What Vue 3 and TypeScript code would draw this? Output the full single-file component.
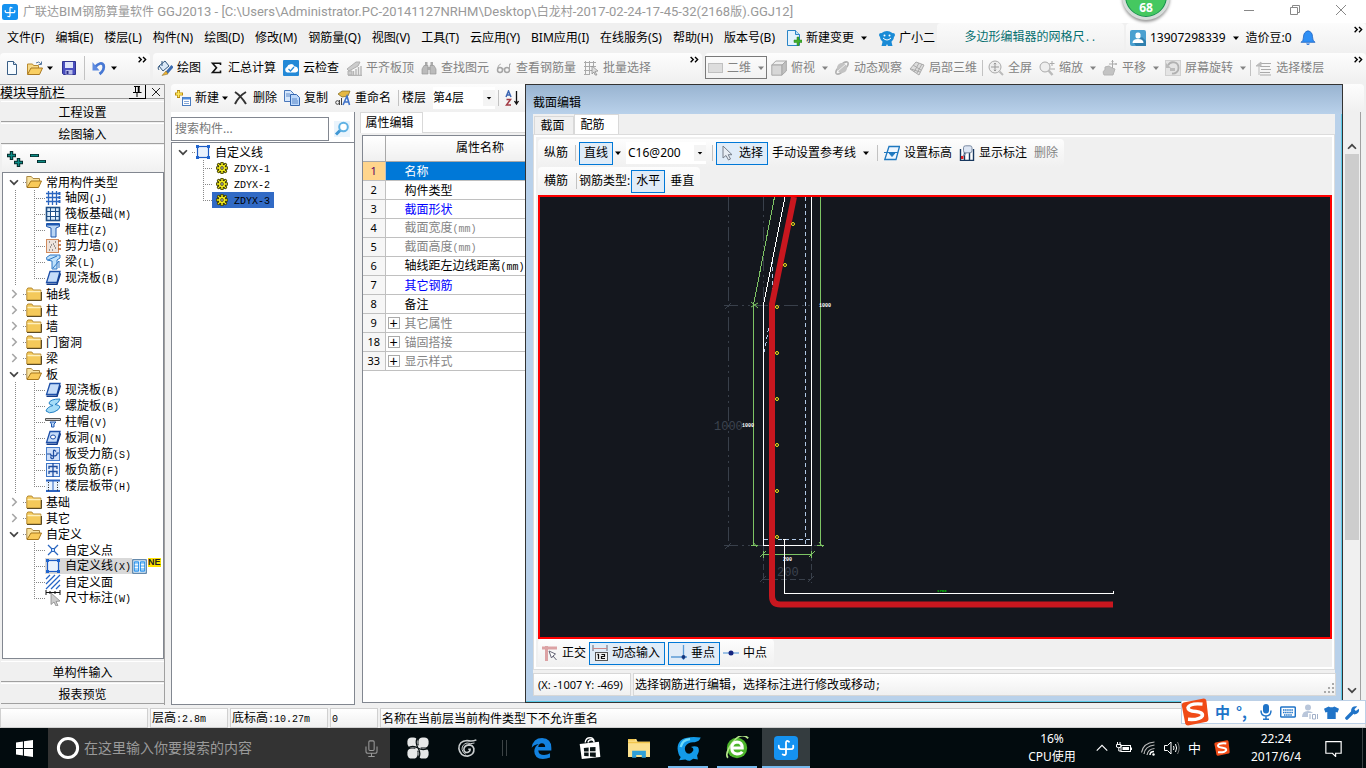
<script setup lang="ts">
import { h, ref } from 'vue'

const icons: Record<string, string> = {
  app: '<rect width="16" height="16" rx="2.500" fill="#1592f0"/><path d="M10 3.800Q8 2.500 8 4.500V11.500Q8 13.300 5.800 12.300M3.200 6.500Q3 8.700 4.800 8.700H11.500Q13.200 8.700 12.800 6.500" fill="none" stroke="#fff" stroke-width="1.200" stroke-linecap="round"/>',
  newdoc: '<path d="M3.500 1.500h6l3 3v10h-9z" fill="#f6fbff" stroke="#3a5f86"/><path d="M9.500 1.500v3h3" fill="#cfe0f2" stroke="#3a5f86"/>',
  open: '<path d="M.5 14V4h5l1 1.500h5V8" fill="#f6d987" stroke="#b98a2f"/><path d="M.5 14.500 4 8h11.500l-3 6.500z" fill="#f9cf62" stroke="#a97822"/><path d="M9 3q3-2.500 5 1M14.500 1.500V4.500H11.500" fill="none" stroke="#5577a0"/>',
  save: '<path d="M1.500 1.500h13v13h-12l-1-1z" fill="#4a4fc0" stroke="#303591"/><rect x="4" y="2" width="8" height="6" fill="#dfe5fa"/><rect x="4.500" y="10" width="7" height="4.500" fill="#b7bce8"/><rect x="5.500" y="11" width="2" height="3" fill="#2c2f85"/>',
  undo: '<path d="M4 7q6-6 8.500-2 1.500 5-4 9" fill="none" stroke="#4778d4" stroke-width="2.800"/><path d="M1.500 2v8.500h7z" fill="#5d8ae0"/>',
  paint: '<path d="m2 6 6-5 4 5-6 5z" fill="#dbe9f7" stroke="#31577f"/><path d="M5 1v5M2 6q-2 2 0 4" stroke="#31577f" fill="none"/><path d="m15.500 6-6 7" stroke="#3c6db3" stroke-width="3"/><path d="m9 11-4 4.500 6-1.500z" fill="#f0b432" stroke="#7d6524" stroke-width=".5"/>',
  sigma: '<path d="M12.500 5V3.200H4.500l4 4.600-4 4.700h8v-2" fill="none" stroke="#111" stroke-width="1.600"/>',
  cloud: '<rect width="16" height="16" rx="1" fill="#2389d7"/><path d="M4 12.500a3 3 0 0 1 0-5.500 4 4 0 0 1 7.500-.5 3 3 0 0 1 1 6z" fill="#fff"/><path d="m5.500 9 2 2 3.500-4" fill="none" stroke="#2389d7" stroke-width="1.300"/>',
  slab: '<path d="m1 9 9-7 4 0-2 4-9 5zM2 15v-4h4v4z" fill="#ccc" stroke="#b0b0b0"/><path d="M7.500 11v5M10 9v7M12.500 7v9M15 6v10M2 15.500h14" stroke="#b5b5b5" stroke-width="1.400"/>',
  binoc: '<path d="M4 2h2.500v4H4zM9.500 2H12v4H9.500z" fill="#aaa"/><path d="M3 5.500h4V14H1V9zM9 5.500h4L15 9v5H9z" fill="#bbb" stroke="#999" stroke-width=".7"/><path d="M6 7h4v3H6z" fill="#aaa"/>',
  glasses: '<circle cx="4" cy="10" r="2.500" fill="none" stroke="#a5a5a5" stroke-width="1.500"/><circle cx="11" cy="10" r="2.500" fill="none" stroke="#a5a5a5" stroke-width="1.500"/><path d="M1.800 8q0-3 3-4M13.500 10V4h1.500M6.500 9h2" stroke="#aaa" fill="none"/>',
  batch: '<path d="M1 2.500h12M1 6.500h12M1 10.500h8M1 14.500h6M2.500 1v14M6.500 1v14M10.500 1v6" stroke="#aaa"/><path d="m9 6 6 5-3 .5 2 3.500h-2l-1-3-2 2z" fill="#ddd" stroke="#888" stroke-width=".7"/>',
  rect2d: '<rect x="1.500" y="3.500" width="14" height="9" fill="#ddd" stroke="#c0c0c0"/>',
  cube: '<path d="m.8 5 4-4h10.500L11 5z" fill="#eee" stroke="#a8a8a8"/><path d="M.8 5H11v10.200H.8z" fill="#d7d7d7" stroke="#a8a8a8"/><path d="m11 5 4.300-4v10L11 15z" fill="#c0c0c0" stroke="#a8a8a8"/>',
  orbit: '<ellipse cx="8" cy="8" rx="8" ry="3" transform="rotate(-45 8 8)" fill="none" stroke="#b0b0b0" stroke-width="1.500"/><circle cx="8" cy="8" r="5" fill="#c3c3c3"/><path d="m4 11 8-7" stroke="#eee"/>',
  part3d: '<path d="m1 9 6-7 8 3-5 10z" fill="#ddd" stroke="#aaa"/><path d="m4 5 8 5M2 9l9 3M10 3 5 12M13 4l-5 9" stroke="#aaa"/>',
  full: '<circle cx="7" cy="7" r="6" fill="#eee" stroke="#aaa"/><path d="M7 3v8M3 7h8M5.800 4.200 7 3l1.200 1.200M5.800 9.800 7 11l1.200-1.200" stroke="#999" fill="none"/><path d="m11.500 11.500 3.500 3.500" stroke="#bbb" stroke-width="2"/>',
  zoom: '<circle cx="6" cy="7" r="5" fill="#eee" stroke="#aaa"/><path d="m9.500 10.500 4 4.500" stroke="#bbb" stroke-width="2.500"/><path d="M13 1v5M10.500 3.500h5M11 9h5" stroke="#aaa"/>',
  pan: '<path d="M2 15q-2-4 1-5V7l4-1 3 2 3 1-2 6z" fill="#c3c3c3" stroke="#b5b5b5"/><path d="M10.500 0v8M7 4h8M9.500 1.500l1-1 1 1M13.500 3l1 1-1 1" stroke="#aaa" fill="none"/>',
  rotate: '<rect x=".5" y=".5" width="15" height="15" fill="#e4e4e4" stroke="#d0d0d0"/><path d="M3 5.500A5.500 5.500 0 0 1 13.500 8 5.500 5.500 0 0 1 7 13.500" fill="none" stroke="#b0b0b0" stroke-width="1.800"/><path d="M1 3v5h5zM5 8h5v3H5z" fill="#bbb"/>',
  floors: '<path d="M5 3.500h10M4 6.500h10M5 9.500h10M4 12.500h10M4 15h11" stroke="#aaa" stroke-width="1.200"/><path d="m0 6 5-4v4zM3 6v9" fill="#bbb" stroke="#bbb"/>',
  docplus: '<path d="M1.500.5h8l4 4v11h-12z" fill="#e4f3fd" stroke="#2a85c7"/><path d="M9.500.5v4h4" fill="#bde0f7" stroke="#2a85c7"/><path d="M8 10h3V7h2v3h3v2.500h-3V15.500h-2v-3H8z" fill="#3fae2a" stroke="#2b8220" stroke-width=".5"/>',
  mascot: '<circle cx="2" cy="5" r="2" fill="#1a8bd6"/><circle cx="14" cy="5" r="2" fill="#1a8bd6"/><ellipse cx="8" cy="7" rx="7" ry="6" fill="#1a8bd6"/><path d="M4 10h8l1.500 6H9l-1-2-1 2H2.500z" fill="#1a8bd6"/><circle cx="5.500" cy="5.500" r="1" fill="#fff"/><circle cx="10.500" cy="5.500" r="1" fill="#fff"/><path d="M4 8q4 4 8 0" fill="none" stroke="#fff"/>',
  user: '<rect width="16" height="16" rx="2" fill="#4aa0d0"/><path d="m4 13 8-6 4 4v5H6z" fill="#2f7fae"/><rect x="5.500" y="2.500" width="5" height="6" rx="2" fill="#fff"/><path d="M2.500 13q0-4 5.500-4t5.500 4z" fill="#fff"/>',
  bell: '<path d="M8 .8q4.500 1 4.500 6 0 4 2.500 5.500H1Q3.500 11 3.500 7q0-5 4.500-6.200z" fill="#2f8ff5" stroke="#1d62c0" stroke-width=".8"/><path d="M6 13.500h4q-2 3-4 0z" fill="#2273dd"/>',
  create: '<path d="M3.500 0v8M0 4h8" stroke="#b98b10" stroke-width="3"/><path d="M3.500 1v6M1 4h6" stroke="#ffe95c" stroke-width="1.500"/><rect x="7.500" y="7.500" width="8" height="8" fill="#fff" stroke="#4a7cc0"/><path d="M8 8.500h7" stroke="#4f8de0" stroke-width="2"/><path d="M9 11.500h5M9 13.500h5" stroke="#86a8d8"/>',
  del: '<path d="M2 2q6 4 11 12M13 2Q6 6 2 14" stroke="#333" stroke-width="2" fill="none"/>',
  copy: '<path d="M.5.500h6l3 3v8h-9z" fill="#d6e7fc" stroke="#4a78bb"/><path d="M6.500 4.500h6l3 3v8h-9z" fill="#bcd8fb" stroke="#3567b0"/><path d="M8 9h5M8 11h6M8 13h6M2 4h4M2 6h4" stroke="#4373ba" stroke-width=".8"/>',
  rename: '<path d="m3 4 4-3h8l-2 5-6 1z" fill="#e5b843" stroke="#7a6520" stroke-width=".7"/><path d="m8 15 4-9 2.500 9M9 12h4" fill="none" stroke="#3e72c8" stroke-width="1.600"/><circle cx="2.500" cy="12.500" r="1.800" fill="none" stroke="#444"/><path d="M4.500 10v5M6.500 8v7" stroke="#444"/>',
  sort: '<path d="M2 7 4.500 1 7 7M3 5h3" fill="none" stroke="#3e68b4" stroke-width="1.500"/><path d="M2.500 9.500h4L2.500 15H7" fill="none" stroke="#a33c46" stroke-width="1.500"/><path d="M12.500 1v12M10.500 11l2 3 2-3" fill="none" stroke="#111" stroke-width="1.300"/>',
  search: '<rect x="0" y="0" width="16" height="16" fill="#eaf4fc"/><circle cx="9.500" cy="6" r="4.300" fill="#fff" stroke="#5fb2e4" stroke-width="2"/><path d="m6 9.500-4 4" stroke="#3f97d4" stroke-width="3"/>',
  folder: '<path d="M.8 14V3.500l1-1.500h4l1.500 2h7.500v10z" fill="#f4c95a" stroke="#b58a32"/><path d="M1.500 5.500h13" stroke="#fff0bd" stroke-width="1.500"/><path d="M1 14.500h14.500V6" fill="none" stroke="#5b4b25"/>',
  fopen: '<path d="M.8 13V2.500h4.500L7 4.500h6.500V7" fill="#f9e3a0" stroke="#a98742"/><path d="M1 13.500 5 7h10.500l-3 6.500z" fill="#f9ca59" stroke="#a5761e"/>',
  grid: '<path d="M3.500 1v14M7.500 1v14M11.500 1v14M1 3.500h13M1 7.500h13M1 11.500h13" stroke="#2b66c0" stroke-width="1.300"/><path d="M13.500 2h2v3h-2zM13.500 6h2v3h-2zM13.500 10h2v3h-2z" fill="#2b66c0"/>',
  raft: '<rect x="1.500" y="1.500" width="13" height="13" fill="#d7eafa" stroke="#1f4f86" stroke-width="1.600"/><rect x="5.500" y="5.500" width="5" height="5" fill="#fff" stroke="#1f4f86"/><path d="M5.500 1v4.500M10.500 1v4.500M5.500 10.500V15M10.500 10.500V15M1 5.500h4.500M1 10.500h4.500M10.500 5.500H15M10.500 10.500H15" stroke="#1f4f86"/>',
  column: '<path d="M1.500 1.500h13v3l-3.500 1.500V15H6V6L1.500 4.500z" fill="#b9d5f4" stroke="#1d57ae"/><path d="M2 2.500h12" stroke="#1d57ae" stroke-width="2"/>',
  wall: '<rect x="1.500" y="1.500" width="12" height="13" fill="#eee3dc" stroke="#cf8a5c"/><path d="M4 4h1M8 6h1M5 9h1M10 10h1M7 12h1M10 4h1M4 12h1M6 7h1M9 8h1" stroke="#444"/><path d="M13 3h3M13 7h3M13 11h3" stroke="#b9602c" stroke-width="1.500"/>',
  beam: '<path d="M1.500 3.500 5 1h10v3l-3 2v9H7V7L2 6z" fill="#bfe1fb" stroke="#2e77c4"/><path d="m3 6 9-4M8 14l6-7v7" stroke="#2e77c4" fill="none"/>',
  plate: '<path d="M5 1.500h10l-3 11H1.500z" fill="#c5dcf9" stroke="#1d4fa8" stroke-width="1.300"/><path d="M1.500 14.300H12l3.500-11" fill="none" stroke="#123c8c" stroke-width="1.500"/>',
  spiral: '<path d="M15 1Q5 1 4 5q0 2 4 2.500Q2 9 1 13q3 3 8 1 5-2 6-5 0-2-5-2.500 4-1.500 5-5.500z" fill="#a5ddf8" stroke="#2480c5"/>',
  cap: '<path d="M.5 4.500h15v2H.5z" fill="#ccc" stroke="#555"/><path d="M5 8h6l-2 2v3H6.500v-3z" fill="#bcd8fa" stroke="#1d57ae"/>',
  hole: '<path d="M5 1.500h10l-3 11H1.500z" fill="#c5dcf9" stroke="#1d4fa8" stroke-width="1.300"/><path d="M1.500 14.300H12l3.500-11" fill="none" stroke="#123c8c" stroke-width="1.500"/><ellipse cx="8" cy="7" rx="2.500" ry="2" fill="#fff" stroke="#1d4fa8"/>',
  rebarS: '<rect x="1.500" y="1.500" width="13" height="13" fill="#cfe0fa" stroke="#4a80cc"/><path d="M11 5.500Q8.500 3 8.500 5V12Q6.500 14 5.500 10.500M2 8h3.500q0 2 3 2 4 0 3.500-3h2" fill="none" stroke="#1e4ea0" stroke-width="1.200"/>',
  rebarF: '<rect x="1.500" y="1.500" width="13" height="13" fill="#e4eefc" stroke="#3c74c6"/><path d="M8 1v14M4 7V4.500h8V7M4 12V9.500h8V12" fill="none" stroke="#1e4ea0" stroke-width="1.300"/>',
  strip: '<rect x="1" y="2" width="14" height="12" fill="#e9f3ff"/><path d="M1 2.500h14M1 13h14" stroke="#2a62c0" stroke-width="1.800"/><path d="M8 3v10" stroke="#2a62c0"/><path d="M3.500 4v9M12.500 4v9" stroke="#222" stroke-dasharray="1 1.500"/>',
  point: '<path d="m3 3 3.500 3.500M13 3 9.500 6.500M3 13l3.500-3.500M13 13 9.500 9.500" stroke="#2a66c0" stroke-width="1.300"/><rect x="6.500" y="6.500" width="3" height="3" fill="#bcdcff" stroke="#2a66c0"/>',
  poly: '<rect x="2.500" y="2.500" width="11" height="11" fill="#eaf2fd" stroke="#1d5bc4" stroke-width="1.200"/><path d="M1 1h3v3H1zM12 1h3v3h-3zM1 12h3v3H1zM12 12h3v3h-3z" fill="#2065cf"/>',
  hatch: '<path d="m1 5 4-4M1 10l9-9M1 15 15 1M6 15l9-9M11 15l4-4" stroke="#2464c6" stroke-width="1.200"/>',
  dim: '<path d="M1 0v5M15 0v5M1 2.500h14M5 1v3M10 1v3" stroke="#111"/><path d="m6 3 9 8-4 .5 2 4-2 .5-2-4-3 2.500z" fill="#ccc" stroke="#888" stroke-width=".8"/>',
  gear: '<path d="M6 0h4v2l3-1 2 2-1 3h2v4h-2l1 3-2 2-3-1v2H6v-2l-3 1-2-2 1-3H0V6h2L1 3l2-2 3 1z" fill="#3a3800"/><path d="M7 1h2v14H7zM1 7h14v2H1zM3 2l11 11-1 1L2 3zM13 2l1 1L3 14l-1-1z" fill="#f4ec1e"/><circle cx="8" cy="8" r="4.200" fill="#f4ec1e"/><circle cx="8" cy="8" r="2.200" fill="#222"/><circle cx="8" cy="8" r="1.100" fill="#fff"/>',
  video: '<rect x=".8" y=".8" width="14.400" height="14.400" fill="#e8f5ff" stroke="#2a5c8c"/><path d="M2.500 3h4.500v10H2.500zM9 3h4.500v10H9z" fill="#9bcdf5" stroke="#1d8bea"/><path d="M3 6h3.500M3 9h3.500M9.500 6H13M9.500 9H13" stroke="#fff"/>',
  expandAll: '<path d="M4.500 0v9M0 4.500h9M11.500 7v9M7 11.500h9" stroke="#082c2c" stroke-width="3.400"/><path d="M4.500 1v7M1 4.500h7M11.500 8v7M8 11.500h7" stroke="#0c8c86" stroke-width="1.400"/>',
  collapseAll: '<path d="M0 4.500h9M7 10.500h9" stroke="#082c2c" stroke-width="3.200"/><path d="M1 4.500h7M8 10.500h7" stroke="#0c8c86" stroke-width="1.300"/>',
  pin: '<path d="M5 3.500h6M6.500 4v5M10 4v5M4 9.500h8.500M8 10v4" stroke="#000" fill="none"/><path d="M9.500 4v5" stroke="#000" stroke-width="1.500"/>',
  close: '<path d="m4 4 8 8M12 4l-8 8" stroke="#222" stroke-width="1"/>',
  down: '<path d="M5 6.500h6L8 10z" fill="currentColor"/>',
  more: '<path d="m3 4.500 3 3-3 3M8 4.500l3 3-3 3" fill="none" stroke="#000" stroke-width="1.600"/>',
  chevD: '<path d="m3.500 6 4.500 4.500L12.500 6" fill="none" stroke="#444" stroke-width="2"/>',
  chevR: '<path d="m6 3.500 4.500 4.500L6 12.500" fill="none" stroke="#a5a5a5" stroke-width="1.800"/>',
  cursor: '<path d="M3 1v12l3-2.500L8.500 15l2-1-2.300-4.300H12z" fill="#e8edf3" stroke="#777f8a"/>',
  level: '<path d="M5 1.500h10.500L12 14.500H.8z" fill="#eef6ff" stroke="#1f78c0" stroke-width="1.300"/><path d="M0 7.500h14M5 8h6l-3 3.500z" fill="#1f78c0" stroke="#1f78c0"/>',
  note: '<path d="M1.500 4v11.500h13V4M5.500 7v8M10.500 7v8" fill="#fff" stroke="#17375e" stroke-width="1.400"/><rect x="4.500" y=".8" width="8.500" height="7" rx="2" fill="#dde6f4" stroke="#7c8ca4"/><path d="m7 8-3 3" stroke="#7c8ca4" stroke-width="1.500"/><path d="M2 11h2.500v3H2z" fill="#d22"/>',
  ortho: '<path d="M0 3h15M4.500 1v15" stroke="#dca2a4" stroke-width="3"/><path d="m7 6 2.500 7 1.500-2 3.500 4M7 6l6.500 3-2.500 2" fill="#fff" stroke="#667" stroke-width="1"/>',
  dyn: '<path d="M1 0v6M15 0v6" stroke="#667"/><path d="M1 3.500h14" stroke="#c88"/><rect x="3.500" y="7.500" width="12" height="8" fill="#f0f0f0" stroke="#555"/><path d="M6.500 9v5M5.500 10l1-1M9.500 9.500h3v2h-3v2h3.500" fill="none" stroke="#111" stroke-width="1.200"/>',
  perp: '<path d="M0 12h16M12.500 0v15" stroke="#5b9bd5" stroke-width="1.300"/><circle cx="12.500" cy="12" r="2" fill="#14387f"/>',
  mid: '<path d="M0 8h16" stroke="#77abdf" stroke-width="1.400"/><circle cx="8" cy="8" r="2.500" fill="#14247f"/>',
  win: '<path d="m0 2.300 6.500-.9v6.100H0zM7.500 1.200 16 0v7.500H7.500zM0 8.500h6.500v6.100L0 13.700zM7.500 8.500H16V16l-8.500-1.200z" fill="#fff"/>',
  ring: '<circle cx="8" cy="8" r="6.400" fill="none" stroke="#fff" stroke-width="2"/>',
  mic: '<rect x="5.500" y=".8" width="5" height="9" rx="1" fill="none" stroke="currentColor"/><path d="M2.800 6v4.500q0 2 2 2h6.400q2 0 2-2V6M8 12.500V15.500M5 15.500h6" fill="none" stroke="currentColor"/>',
  pinwheel: '<rect x=".3" y=".3" width="7.400" height="7.400" rx="3" fill="#e6e8e8"/><rect x="8.300" y=".3" width="7.400" height="7.400" rx="3" fill="#e6e8e8"/><rect x=".3" y="8.300" width="7.400" height="7.400" rx="3" fill="#e6e8e8"/><rect x="8.300" y="8.300" width="7.400" height="7.400" rx="3" fill="#e6e8e8"/><rect x="6" y="6" width="4" height="4" fill="#e6e8e8"/><path d="M7.800 0Q5.500 4 8 8 4 5.500 0 8.300M8.300 16Q10.500 12 8 8q4 2.500 8-.2" fill="none" stroke="#071012" stroke-width=".9"/>',
  swirl: '<path d="M15.500 1.500Q12 3 8 2 1.500 2.500 1.500 8.500q1 6 7 6 5.500-1 5-6-1-3-4-3-4 .5-4 3.800.5 2.700 3 2.200 2-.5 2-2.500H9" fill="none" stroke="#c9cdce" stroke-width="1.300"/><path d="M14 4q-3 1-6 0-4 1-4 5 .5 3 3 4" fill="none" stroke="#c9cdce" stroke-width=".8"/>',
  edge: '<path d="M.5 7.500Q1.500 0 8.500 0 15.500.300 15.500 7.500V9.500H5.500q.5 3.500 4.500 3.500 2.500 0 4.500-1.300v3.200Q12 16 9 16 2.500 15.500 2.500 10q.3-4 3.500-5.500Q2 5 .5 7.500zM5.500 6.800h5.300Q10.700 4 8.300 4 6 4 5.500 6.800z" fill="#1382e0" fill-rule="evenodd"/>',
  store: '<path d="M4.500 4Q5 .5 8 .5T11 4M6.500 4Q7 2 9 2t2 2" fill="none" stroke="#fff"/><path d="m.5 5 14-1.500 1 11L2 16z" fill="#fff"/><path d="M3.500 8 7 7.700v2.800H3.700zM8 7.500l4-.3v3.200H8zM3.700 11.300H7V14l-3.200-.2zM8 11.300h4.200v3.200L8 14.200z" fill="#0a1416"/>',
  explorer: '<path d="M0 1.500h6l1 2h9v11H0z" fill="#fbe08e"/><path d="M0 2h5M0 4h16" stroke="#f1c54c"/><path d="M3 15V10h10v5h-3v-2H6v2z" fill="#2f9fd8"/>',
  gblue: '<path d="M15.800 1Q12 .500 9 .8 1 1.500 1 8q.3 4 2 5.500L2 15.500 6 15q1.500 1 3 .8l2-1.300 3 .5-.5-2.500Q15.500 9 14 7q-2-1-4.500 0 2 .5 1.500 2.500-1.500 2.500-4 1.500-2-2-1-4.500 2-3 6-2.500Q15 3.500 15.800 1z" fill="#139ae8"/><path d="M3 7q1-4.500 6-5" stroke="#6fdcfa" fill="none" stroke-width="1.500"/>',
  egreen: '<circle cx="8" cy="8" r="6.800" fill="#4cb52b"/><path d="M2 14.500Q-.5 12 5 4.500T15.500 1.500" stroke="#b4e68a" stroke-width="1.200" fill="none"/><path d="M11.500 10.500Q10.500 12 8 12 4.500 11.700 4.500 8T8 4q3.500 0 3.500 4H5" fill="none" stroke="#fff" stroke-width="2"/>',
  tri: '<path d="m2 11 6-6 6 6" fill="none" stroke="#fff" stroke-width="1.300"/>',
  battery: '<rect x="5" y="5.500" width="9.500" height="6" fill="none" stroke="#fff"/><rect x="6.500" y="7" width="6.500" height="3" fill="#fff"/><path d="M15.500 7.500v2.500M1.500 2v2.500M4 2v2.500M.5 4.500H5v2.500q-2 1.500-4.500 0zM2.800 8v3H5" fill="none" stroke="#fff"/>',
  wifi: '<path d="M1.500 12.500Q3 3 14.500 2M4 14Q5 6 14.500 5M7 15Q8 9 14.500 8.500" fill="none" stroke="#bbb" stroke-width="1.200"/><path d="M10 15q0-3.500 4-3.500" fill="none" stroke="#fff" stroke-width="1.500"/><circle cx="13.500" cy="14.500" r="1.200" fill="#fff"/>',
  speaker: '<path d="M.5 5.500h3L7 2v12l-3.500-3.500h-3z" fill="none" stroke="#fff"/><path d="M9.500 6q1 2 0 4M11.500 4q2.200 4 0 8" fill="none" stroke="#fff"/><path d="M13.500 2q3.300 6 0 12" fill="none" stroke="#777"/>',
  sogou: '<path d="M1.500 2.500 13 .3q1.200 0 1.500 1.200L15.700 12q0 1.200-1 1.500L4 15.700q-1.300 0-1.600-1.200L.4 4q0-1.200 1.100-1.500z" fill="#f04b17"/><path d="M12.300 3.500Q5 2.800 4 5.500q0 1.800 4.500 2.200 4.200.5 3.700 2.500-1.500 2.500-8.200 2" fill="none" stroke="#fff" stroke-width="2"/>',
  notice: '<path d="M.8 1.500h14.400v11H10v3l-3-3H.8z" fill="none" stroke="#fff" stroke-width="1.100"/>',
  smic: '<rect x="5" y="0" width="6" height="9.500" rx="3" fill="#2074c8"/><path d="M3 6.500Q3 12 8 12t5-5.500M8 12v3M5 15.300h6" fill="none" stroke="#2074c8" stroke-width="1.500"/>',
  skey: '<rect x=".7" y="3" width="14.600" height="10" rx="1" fill="#fff" stroke="#2074c8" stroke-width="1.500"/><path d="M3 6h10M3 8.500h10M4 11h8" stroke="#2074c8" stroke-width="1.300" stroke-dasharray="1.500 .6"/>',
  suser: '<circle cx="6" cy="3.500" r="3" fill="#b9c6da"/><path d="M0 13q0-6 6-6t6 6z" fill="#b9c6da"/><path d="M6 9h10v6.500H6z" fill="#fff"/><path d="M8 10v5M10.500 10.500h3v4.500h-3zM15.500 10v5" fill="none" stroke="#a2b0c8"/>',
  shirt: '<path d="M5 1.500q3 2 6 0L16 4l-1.500 4-2-.5V15h-9V7.500l-2 .5L0 4z" fill="#2074c8"/>',
  wrench: '<path d="m2 14 7-7" stroke="#2074c8" stroke-width="3.600" stroke-linecap="round"/><path d="M13 1.500 10 4.500l1.500 2 3.300-2.500Q16 9 10 10L6.500 7Q6 1 13 1.500z" fill="#2074c8"/>',
}
const Ico = (p: { n: string; s?: number | string }) =>
  h('svg', { viewBox: '0 0 16 16', width: p.s ?? 16, height: p.s ?? 16, 'aria-hidden': 'true', innerHTML: icons[p.n] })

// Splits a label into ASCII and ideograph runs so that each can be set in its own size.
const runs = (t: string) => t.split(/([\x20-\x7e]+)/).filter(Boolean).map((s) => ({ s, ascii: /^[\x20-\x7e]/.test(s) }))
// Song-style text: ASCII runs are set half as wide as the ideographs.
const Song = (p: { t: string }) =>
  h('span', { class: 'song' }, runs(p.t).map((r) => (r.ascii ? h('span', { class: 'half' }, r.s) : r.s)))

const caption = '广联达BIM钢筋算量软件 GGJ2013 - [C:\\Users\\Administrator.PC-20141127NRHM\\Desktop\\白龙村-2017-02-24-17-45-32(2168版).GGJ12]'
const menus = ['文件(F)', '编辑(E)', '楼层(L)', '构件(N)', '绘图(D)', '修改(M)', '钢筋量(Q)', '视图(V)', '工具(T)', '云应用(Y)', 'BIM应用(I)', '在线服务(S)', '帮助(H)', '版本号(B)']

interface Tool { icon?: string; text: string; off?: boolean; drop?: boolean; sep?: boolean }
const drawTools: Tool[] = [
  { icon: 'paint', text: '绘图' }, { icon: 'sigma', text: '汇总计算' }, { icon: 'cloud', text: '云检查' },
  { icon: 'slab', text: '平齐板顶', off: true }, { icon: 'binoc', text: '查找图元', off: true },
  { icon: 'glasses', text: '查看钢筋量', off: true }, { icon: 'batch', text: '批量选择', off: true },
]
const viewTools: Tool[] = [
  { icon: 'cube', text: '俯视', drop: true }, { icon: 'orbit', text: '动态观察' }, { icon: 'part3d', text: '局部三维' },
  { icon: 'full', text: '全屏', sep: true }, { icon: 'zoom', text: '缩放', drop: true }, { icon: 'pan', text: '平移', drop: true },
  { icon: 'rotate', text: '屏幕旋转', drop: true }, { icon: 'floors', text: '选择楼层', sep: true },
]
const editTools: Tool[] = [
  { icon: 'create', text: '新建', drop: true }, { icon: 'del', text: '删除' }, { icon: 'copy', text: '复制' }, { icon: 'rename', text: '重命名' },
]

interface Leaf { icon: string; text: string; sel?: boolean }
interface Group { text: string; kids?: Leaf[] }
const groups: Group[] = [
  { text: '常用构件类型', kids: [
    { icon: 'grid', text: '轴网(J)' }, { icon: 'raft', text: '筏板基础(M)' }, { icon: 'column', text: '框柱(Z)' },
    { icon: 'wall', text: '剪力墙(Q)' }, { icon: 'beam', text: '梁(L)' }, { icon: 'plate', text: '现浇板(B)' }] },
  { text: '轴线' }, { text: '柱' }, { text: '墙' }, { text: '门窗洞' }, { text: '梁' },
  { text: '板', kids: [
    { icon: 'plate', text: '现浇板(B)' }, { icon: 'spiral', text: '螺旋板(B)' }, { icon: 'cap', text: '柱帽(V)' }, { icon: 'hole', text: '板洞(N)' },
    { icon: 'rebarS', text: '板受力筋(S)' }, { icon: 'rebarF', text: '板负筋(F)' }, { icon: 'strip', text: '楼层板带(H)' }] },
  { text: '基础' }, { text: '其它' },
  { text: '自定义', kids: [
    { icon: 'point', text: '自定义点' }, { icon: 'poly', text: '自定义线(X)', sel: true }, { icon: 'hatch', text: '自定义面' }, { icon: 'dim', text: '尺寸标注(W)' }] },
]
const parts = ['ZDYX-1', 'ZDYX-2', 'ZDYX-3']
const picked = ref('ZDYX-3')

const props = [
  { n: 1, text: '名称', kind: 'on' }, { n: 2, text: '构件类型', kind: '' }, { n: 3, text: '截面形状', kind: 'blue' },
  { n: 4, text: '截面宽度(mm)', kind: 'dim' }, { n: 5, text: '截面高度(mm)', kind: 'dim' }, { n: 6, text: '轴线距左边线距离(mm)', kind: '' },
  { n: 7, text: '其它钢筋', kind: 'blue' }, { n: 8, text: '备注', kind: '' }, { n: 9, text: '其它属性', kind: 'dim', plus: true },
  { n: 18, text: '锚固搭接', kind: 'dim', plus: true }, { n: 33, text: '显示样式', kind: 'dim', plus: true },
]
const bars = [[793, 224], [785, 265], [777, 307], [777, 353], [777, 399], [777, 445], [777, 491], [777, 537]]
const search = ref('')
const floor = ref('第4层')
const spec = ref('C16@200')
</script>

<template>
  <div class="screen">
    <header class="title">
      <Ico n="app" />
      <span><span v-for="(r, i) in runs(caption)" :key="i" :class="{ cap: r.ascii }">{{ r.s }}</span></span>
      <div class="winbtns">
        <button aria-label="最小化"><svg width="12" height="12"><path d="M1 6.500h10" stroke="#888" /></svg></button>
        <button aria-label="还原"><svg width="12" height="12"><path d="M1.500 3.500h7v7h-7zM3.500 3V1.500h7v7H9" fill="none" stroke="#888" /></svg></button>
        <button aria-label="关闭"><svg width="12" height="12"><path d="m1 1 10 10M11 1 1 11" stroke="#888" /></svg></button>
      </div>
    </header>
    <div class="badge">68</div>

    <div class="menurow">
      <nav class="menus">
        <button v-for="m in menus" :key="m">{{ m }}</button>
        <button class="tool"><Ico n="docplus" /><span>新建变更</span><Ico n="down" class="arrow wide" /></button>
        <button class="tool"><Ico n="mascot" /><span>广小二</span></button>
      </nav>
      <div class="news"><a href="#"><Song t="多边形编辑器的网格尺.." /></a></div>
      <div class="account">
        <button class="tool"><Ico n="user" /><span>13907298339</span><Ico n="down" class="arrow" /></button>
        <button>造价豆:0</button>
        <button aria-label="通知"><Ico n="bell" /></button>
        <button class="more" aria-label="更多"><Ico n="more" s="14" /></button>
      </div>
    </div>

    <div class="bars">
      <div class="bar first">
        <button aria-label="新建"><Ico n="newdoc" /></button>
        <button aria-label="打开"><Ico n="open" /></button>
        <button aria-label="打开选项"><Ico n="down" class="arrow" /></button>
        <button aria-label="保存"><Ico n="save" /></button>
        <i class="sep"></i>
        <button aria-label="撤销"><Ico n="undo" /></button>
        <button aria-label="撤销选项"><Ico n="down" class="arrow" /></button>
        <button class="more" aria-label="更多"><Ico n="more" s="14" /></button>
      </div>
      <div class="bar second">
        <button v-for="t in drawTools" :key="t.text" class="tool" :class="{ off: t.off }"><Ico :n="t.icon!" /><span>{{ t.text }}</span></button>
        <button class="more" aria-label="更多"><Ico n="more" s="14" /></button>
      </div>
      <div class="bar third">
        <button class="tool off boxed"><Ico n="rect2d" /><span>二维</span><Ico n="down" class="arrow" /></button>
        <template v-for="t in viewTools" :key="t.text">
          <i v-if="t.sep" class="sep"></i>
          <button class="tool off"><Ico :n="t.icon!" /><span>{{ t.text }}</span><Ico v-if="t.drop" n="down" class="arrow" /></button>
        </template>
        <button class="more" aria-label="更多"><Ico n="more" s="14" /></button>
      </div>
    </div>

    <main class="work">
      <aside class="nav">
        <div class="navhead"><Song t="模块导航栏" /><button class="pin" aria-label="固定"><Ico n="pin" /></button><button aria-label="关闭"><Ico n="close" /></button></div>
        <button class="wide-btn"><Song t="工程设置" /></button>
        <button class="wide-btn"><Song t="绘图输入" /></button>
        <div class="navtools"><button aria-label="全部展开"><Ico n="expandAll" /></button><button aria-label="全部折叠"><Ico n="collapseAll" /></button></div>
        <ul class="tree">
          <li v-for="(g, gi) in groups" :key="gi">
            <div class="row"><Ico :n="g.kids ? 'chevD' : 'chevR'" s="14" /><i class="dots"></i><Ico :n="g.kids ? 'fopen' : 'folder'" /><Song :t="g.text" /></div>
            <ul v-if="g.kids">
              <li v-for="(k, ki) in g.kids" :key="k.text" class="row kid">
                <svg class="trunk" width="19" height="16"><path v-if="gi < groups.length - 1" d="M.5 0v16" stroke="#888" stroke-dasharray="1 1" /></svg>
                <svg width="11" height="16"><path :d="ki === g.kids.length - 1 ? 'M.5 0v8M0 8.500h11' : 'M.5 0v16M0 8.500h11'" stroke="#888" stroke-dasharray="1 1" /></svg>
                <span class="leaf" :class="{ sel: k.sel }"><Ico :n="k.icon" /><Song :t="k.text" /></span>
                <template v-if="k.sel"><Ico n="video" s="15" /><b class="ne">NE</b></template>
              </li>
            </ul>
          </li>
        </ul>
        <button class="wide-btn"><Song t="单构件输入" /></button>
        <button class="wide-btn"><Song t="报表预览" /></button>
      </aside>

      <section class="main">
        <div class="bar edit">
          <button v-for="t in editTools" :key="t.text" class="tool"><Ico :n="t.icon!" /><span>{{ t.text }}</span><Ico v-if="t.drop" n="down" class="arrow tight" /></button>
          <i class="sep"></i>
          <label for="floor">楼层</label>
          <div class="combo"><select id="floor" v-model="floor"><option>第4层</option></select><Ico n="down" /></div>
          <i class="sep"></i>
          <button aria-label="排序"><Ico n="sort" /></button>
        </div>
        <div class="cols">
          <div class="partcol">
            <div class="searchrow"><input v-model="search" type="text" placeholder="搜索构件..." aria-label="搜索构件" /><button aria-label="搜索"><Ico n="search" /></button></div>
            <ul class="parts">
              <li class="row"><Ico n="chevD" s="14" /><i class="dots"></i><Ico n="poly" /><Song t="自定义线" /></li>
              <li v-for="(p, i) in parts" :key="p" class="row part">
                <svg width="9" height="16"><path :d="i === 2 ? 'M.5 0v8M0 8.500h9' : 'M.5 0v16M0 8.500h9'" stroke="#888" stroke-dasharray="1 1" /></svg>
                <button :class="{ on: picked === p }" @click="picked = p"><Ico n="gear" s="12" /><Song :t="p" /></button>
              </li>
            </ul>
          </div>
          <div class="propcol">
            <div class="proptab"><button>属性编辑</button></div>
            <div class="propbox">
              <table>
                <colgroup><col class="c1" /><col class="c2" /><col /></colgroup>
                <thead><tr><th></th><th><Song t="属性名称" /></th><th></th></tr></thead>
                <tbody>
                  <tr v-for="p in props" :key="p.n" :class="p.kind">
                    <th scope="row">{{ p.n }}</th>
                    <td><div class="cell"><span class="pm"><button v-if="p.plus" aria-label="展开">+</button></span><Song :t="p.text" /></div></td>
                    <td></td>
                  </tr>
                </tbody>
              </table>
            </div>
          </div>
          <div class="scroll"><Ico n="chevD" s="14" class="flip" /><i class="thumb"></i><Ico n="chevD" s="14" /></div>
          <div class="edge"></div>
        </div>
      </section>

      <section class="dialog">
        <h2>截面编辑</h2>
        <div class="dbody">
          <div class="tabs"><button>截面</button><button class="cur">配筋</button></div>
          <div class="pane">
            <div class="bar d1">
              <button>纵筋</button><i class="sep"></i>
              <button class="act">直线</button><Ico n="down" class="arrow" />
              <div class="combo spec"><select v-model="spec" aria-label="钢筋规格"><option>C16@200</option></select><Ico n="down" /></div>
              <i class="sep"></i>
              <button class="act tool"><Ico n="cursor" /><span>选择</span></button>
              <button class="tool"><span>手动设置参考线</span><Ico n="down" class="arrow wide" /></button>
              <i class="sep"></i>
              <button class="tool"><Ico n="level" /><span>设置标高</span></button>
              <button class="tool"><Ico n="note" /><span>显示标注</span></button>
              <button class="off">删除</button>
            </div>
            <div class="bar d2">
              <button>横筋</button><i class="sep"></i><span>钢筋类型:</span>
              <button class="act">水平</button><button class="vert">垂直</button>
            </div>
            <div class="canvas">
              <svg width="790" height="440" viewBox="540 197 790 440" fill="none">
                <g stroke="#39404b" stroke-dasharray="14 4 2 4 2 4" shape-rendering="crispEdges">
                  <path d="M728.500 197v352M763.500 197v110M724 305.500h90M724 545.500h96" />
                  <path d="M763.500 546v37M811.500 546v37M763 579.500h48" stroke-dasharray="6 3" />
                </g>
                <path d="m725 309 6-6M725 549l6-6M760 582l6-6M808 582l6-6" stroke="#39404b" />
                <g font-family="Liberation Mono" font-size="12" fill="#3c434e"><text x="714" y="430">1000</text><text x="777" y="576">200</text></g>
                <g stroke="#b0c8e6" stroke-dasharray="4 3" shape-rendering="crispEdges"><path d="M805.500 197v349M764 539.500h47M772.500 260v42M768.500 328l-4 24" /></g>
                <path d="M785 197 763.500 305v240.500h48V197" stroke="#fff" shape-rendering="crispEdges" />
                <g stroke="#7dc364" shape-rendering="crispEdges">
                  <path d="M774.500 197 753.500 305v240M820.500 197v348M763 554.500h48M751 545.500h7M817 545.500h7M763.500 551v7M811.500 551v7" />
                </g>
                <path d="m751 302 7 6M751 307l7-4M753 542l4 5M819 542l4 5M760 557l6-6M809 557l6-6" stroke="#7dc364" />
                <path d="M794 197 772 304v292q0 8.500 8.500 8.500H1113" stroke="#c8171f" stroke-width="6" />
                <path d="M784.500 539v54.500H1113M1113.500 591v3M783 539.500h3" stroke="#fff" shape-rendering="crispEdges" />
                <circle v-for="b in bars" :key="b[1]" :cx="b[0]" :cy="b[1]" r="1.500" stroke="#f2e51c" />
                <g font-family="Liberation Mono" font-size="5" font-weight="bold" fill="#fff"><text x="742" y="427">1000</text><text x="819" y="307">1000</text><text x="783" y="561">200</text><text x="937" y="592" fill="#00c800" font-size="4">1700</text></g>
              </svg>
            </div>
            <div class="bar d3">
              <button class="tool"><Ico n="ortho" /><span>正交</span></button>
              <button class="act tool"><Ico n="dyn" /><span>动态输入</span></button>
              <button class="act tool"><Ico n="perp" /><span>垂点</span></button>
              <button class="tool"><Ico n="mid" /><span>中点</span></button>
            </div>
          </div>
          <div class="dstatus">
            <span class="pos">(X: -1007 Y: -469)</span>
            <span class="hint"><Song t="选择钢筋进行编辑，选择标注进行修改或移动;" /></span>
            <svg class="grip" width="11" height="11"><path d="M8 1h2v2H8zM4 5h2v2H4zM8 5h2v2H8zM0 9h2v2H0zM4 9h2v2H4zM8 9h2v2H8z" fill="#aaa" /></svg>
          </div>
        </div>
      </section>
    </main>

    <footer class="status">
      <span class="s1"></span><span class="s2"><Song t="层高:2.8m" /></span><span class="s3"><Song t="底标高:10.27m" /></span><span class="s4"><Song t="0" /></span>
      <span class="s5"><Song t="名称在当前层当前构件类型下不允许重名" /></span>
    </footer>

    <div class="ime">
      <Ico n="sogou" s="28" class="logo" /><b>中</b><b class="punct">°,</b><Ico n="smic" /><Ico n="skey" /><Ico n="suser" /><Ico n="shirt" s="15" /><Ico n="wrench" s="15" />
    </div>

    <div class="taskbar">
      <button class="start" aria-label="开始"><Ico n="win" s="17" /></button>
      <label class="cortana"><Ico n="ring" s="24" /><input type="text" placeholder="在这里输入你要搜索的内容" /><Ico n="mic" s="17" /></label>
      <div class="apps">
        <button aria-label="风车"><Ico n="pinwheel" s="22" /></button>
        <button aria-label="广联达"><Ico n="swirl" s="20" /></button>
        <i class="pair"></i>
        <button aria-label="Edge"><Ico n="edge" s="21" /></button>
        <button aria-label="应用商店"><Ico n="store" s="22" /></button>
        <button aria-label="文件资源管理器"><Ico n="explorer" s="22" /></button>
        <button class="run" aria-label="广联达 G"><Ico n="gblue" s="25" /></button>
        <button class="run" aria-label="浏览器"><Ico n="egreen" s="24" /></button>
        <button class="run front" aria-label="GGJ2013"><Ico n="app" s="24" /></button>
      </div>
      <div class="tray">
        <div class="two cpu"><span>16%</span><span>CPU使用</span></div>
        <button aria-label="显示隐藏的图标"><Ico n="tri" s="14" /></button>
        <Ico n="battery" /><Ico n="wifi" /><Ico n="speaker" /><span class="zh">中</span><Ico n="sogou" />
        <div class="two clock"><span>22:24</span><span>2017/6/4</span></div>
        <button class="notice" aria-label="操作中心"><Ico n="notice" s="17" /></button>
        <i class="peek"></i>
      </div>
    </div>
  </div>
</template>

<style>
body { overflow: hidden; }
.song { font-family: "Liberation Sans", "Noto Sans CJK SC", sans-serif; white-space: nowrap; padding-top: 2px; }
.song .half { font-family: "Liberation Mono", monospace; font-size: 10px; white-space: pre; }
</style>

<style scoped>
* { box-sizing: border-box; }
.screen { position: relative; display: flex; flex-direction: column; height: 100vh; overflow: hidden; background: #f0f0f0; color: #000; font: 12px/16px "Noto Sans", "Noto Sans CJK SC", sans-serif; }
button, input, select { font: inherit; color: inherit; margin: 0; padding: 0; border: 0; background: none; border-radius: 0; }
button { display: flex; align-items: center; white-space: nowrap; flex: none; }
svg { display: block; flex: none; }
ul { list-style: none; margin: 0; padding: 0; }
a { color: #067070; text-decoration: none; }

.title { display: flex; align-items: center; gap: 5px; height: 23px; padding: 0 0 0 2px; background: #fff; color: #999; white-space: nowrap; flex: none; }
.cap { font-family: Roboto, sans-serif; font-size: 13px; white-space: pre; }
.winbtns { display: flex; gap: 34px; margin-left: auto; padding-right: 19px; padding-bottom: 3px; }
.badge { position: absolute; top: -28px; right: 196px; width: 48px; height: 48px; border-radius: 50%; border: 3px solid #d6dcda; background: #45c860; box-shadow: inset 0 0 0 1px #188a52, 0 2px 3px #999; color: #fff; font: bold 12px/12px "Open Sans", sans-serif; display: flex; align-items: flex-end; justify-content: center; padding-bottom: 3px; z-index: 3; }

.menurow { display: flex; height: 30px; flex: none; gap: 2px; }
.menus { display: flex; align-items: center; gap: 11px; padding-left: 7px; flex: none; width: 935px; }
.news { width: 187px; display: flex; align-items: center; justify-content: center; background: linear-gradient(#fafafa, #f0f0f0); border-radius: 4px; }
.account { flex: 1; display: flex; align-items: center; gap: 8px; padding-left: 4px; background: linear-gradient(#fcfcfc, #f0f0f0); border-radius: 4px; }
.account .more { margin-bottom: 10px; }
.tool { gap: 4px; }
.arrow { width: 16px; margin: 0 -6px 0 -2px; }
.arrow.wide { margin: 0 -4px 0 -2px; }
.off { color: #838383; }
.more { margin-left: auto; align-self: flex-start; }

.bars { display: flex; gap: 3px; height: 29px; margin-bottom: 2px; flex: none; }
.bar { display: flex; align-items: center; gap: 7px; background: linear-gradient(#fdfdfd, #f0f0f0); border-radius: 4px; white-space: nowrap; }
.sep { width: 1px; height: 16px; background: #c2c2c2; margin-right: -1px; flex: none; }
.first { width: 150px; padding-left: 4px; gap: 7px; }
.first > .arrow, .first button .arrow { margin: 0 -4px 0 -8px; }
.first .sep { height: 24px; }
.second { width: 549px; padding-left: 4px; }
.third { flex: 1; }
.third .sep { margin: 0 -2px; }
.boxed { height: 23px; border: 1px solid #7a7a7a; padding: 0 3px 0 1px; margin-right: -3px; }

.work { position: relative; flex: 1; min-height: 0; display: flex; gap: 6px; padding-bottom: 2px; }
.nav { width: 165px; display: flex; flex-direction: column; flex: none; border-right: 1px solid #a0a0a0; }
.navhead { display: flex; align-items: center; height: 15px; margin: 0 0 2px; border: solid #999; border-width: 1px 0 1px; font-size: 13px; }
.navhead .pin { margin-left: auto; border: solid #000; border-width: 0 1px 1px 0; height: 14px; margin-right: 2px; }
.wide-btn { height: 21px; margin: 0 0 1px 1px; justify-content: center; border: solid; border-color: #fff #fff #a0a0a0; border-width: 1px 0 1px; background: #f0f0f0; }
.navtools { height: 27px; display: flex; align-items: center; gap: 7px; padding-left: 5px; margin-left: 2px; background: linear-gradient(#fff, #f0f0f0); flex: none; }
.tree { flex: 1; min-height: 0; overflow: hidden; background: #fff; border: 1px solid #828790; margin: 0 0 2px 2px; padding-top: 1px; }
.row { display: flex; align-items: center; height: 16px; }
.tree > li > .row { padding-left: 4px; }
.dots { width: 3px; height: 1px; margin: 0 0 0 2px; background: repeating-linear-gradient(90deg, #888 0 1px, #fff 1px 2px); }
.row > .song { margin-left: 4px; }
.kid { padding-left: 12px; }
.leaf { display: flex; align-items: center; gap: 4px; height: 16px; padding-right: 1px; }
.sel { background: #d9d9d9; }
.ne { align-self: flex-start; margin-left: 1px; background: #ffe100; color: #222; font: bold 9px/9px "Liberation Sans", sans-serif; }

.main { flex: 1; min-width: 0; display: flex; flex-direction: column; }
.edit { height: 28px; padding-left: 4px; flex: none; margin-right: 2px; }
.edit .tight { margin: 0 -7px 0 -6px; }
.edit label { margin-left: -4px; }
.combo { display: flex; align-items: center; height: 22px; width: 62px; background: #fff; }
.combo select { appearance: none; flex: 1; min-width: 0; padding-left: 0; height: 22px; }
.combo svg { width: 12px; background: #f4f4f4; }
.edit .sep { margin-right: 0; }
.edit .combo { margin-left: 0; }
.edit .combo + .sep { margin-left: -4px; }
.edit .sep + button { margin-left: -2px; }
.cols { flex: 1; min-height: 0; display: flex; }
.partcol { width: 184px; display: flex; flex-direction: column; flex: none; border-right: 1px solid #828790; }
.searchrow { display: flex; align-items: center; gap: 5px; height: 30px; padding-top: 3px; background: #fff; }
.searchrow input { width: 158px; height: 24px; border: 1px solid #828790; padding: 0 3px; background: #fff; }
.searchrow input::placeholder { color: #777; opacity: 1; }
.parts { flex: 1; background: #fff; border: 1px solid #828790; border-right: 0; padding-top: 1px; }
.parts > .row:first-child { padding-left: 4px; }
.part { padding-left: 31px; }
.part button { height: 16px; padding: 0 4px 0 4px; gap: 6px; }
.part button .song { margin-left: 0; }
.part button.on { background: #316ac5; }
.propcol { flex: 1; min-width: 0; display: flex; flex-direction: column; padding-left: 5px; }
.proptab { height: 21px; background: #fff; border-bottom: 1px solid #d9d9d9; flex: none; }
.proptab button { width: 63px; height: 21px; justify-content: center; background: #fff; border: 1px solid #d9d9d9; border-bottom: 0; padding-right: 4px; font-family: "Liberation Sans", "Noto Sans CJK SC", sans-serif; }
.propbox { flex: 1; background: #fff; margin: 2px 0 2px 2px; border: 1px solid #828790; overflow: hidden; }
table { width: 100%; table-layout: fixed; border-collapse: collapse; }
.c1 { width: 22px; }
.c2 { width: 190px; }
th, td { padding: 0; height: 19px; border: solid #c0c0c0; border-width: 0 1px 1px 0; line-height: 16px; font-weight: normal; }
thead th { height: 25px; background: linear-gradient(#fff, #f0f0f0); border-color: #a8a8a8; }
tbody th { background: #f6f6f6; font-size: 11px; text-align: center; }
.cell { display: flex; align-items: center; height: 18px; }
.pm { width: 19px; padding-left: 2px; display: flex; }
.pm button { width: 12px; height: 12px; border: 1px solid #aaa; justify-content: center; color: #000; font: 14px/10px "Liberation Sans", sans-serif; }
.on th { background: #ffd58c; color: #600060; }
.on td { background: #0078d7; color: #fff; }
.blue td { color: #00f; }
.dim td { color: #858585; }
.scroll { width: 17px; display: flex; flex-direction: column; align-items: center; padding: 28px 0 8px; background: #f0f0f0; }
.flip { transform: rotate(180deg); }
.thumb { width: 14px; height: 386px; background: #cdcdcd; margin-bottom: auto; }
.edge { width: 6px; border-left: 1px solid #a0a0a0; background: #f0f0f0; }

.dialog { position: absolute; left: 525px; right: 23px; top: 0; bottom: 4px; border: 1px solid #333; background: #b9d1ea; display: flex; flex-direction: column; padding: 0 7px 6px; box-shadow: inset -1px -1px #5bcbe8; }
.dialog h2 { margin: 0 -7px; padding: 6px 0 0 7px; height: 29px; font: 12px/24px "Noto Sans", "Noto Sans CJK SC", sans-serif; background: linear-gradient(#99b4d1, #b9d1ea); }
.dbody { flex: 1; min-height: 0; background: #f0f0f0; display: flex; flex-direction: column; }
.tabs { display: flex; align-items: flex-end; height: 20px; padding-left: 1px; flex: none; }
.tabs button { width: 40px; height: 18px; justify-content: center; border: 1px solid #d9d9d9; border-bottom: 0; padding-right: 3px; }
.tabs .cur { width: 45px; height: 20px; background: #fff; padding-right: 8px; }
.pane { flex: 1; min-height: 0; display: flex; flex-direction: column; align-items: flex-start; border: 1px solid #dcdcdc; padding: 4px 2px 2px 4px; box-shadow: inset 0 0 0 2px #fff; }
.d1 { height: 28px; padding: 0 6px; width: 526px; flex: none; }
.d1 .tool { gap: 4px; }
.act { height: 23px; padding: 0 4px; border: 1px solid #0078d7; background: #e0ecf8; }
.act.tool { padding-left: 2px; }
.d1 .act:not(.tool) { margin-left: -3px; }
.d1 > .arrow { margin: 0 -9px 0 -10px; }
.spec { width: 85px; margin-left: 2px; }
.spec select { padding-left: 2px; }
.spec + .sep { margin-left: -1px; }
.d1 .act.tool { margin-left: -3px; padding-left: 3px; margin-right: -3px; gap: 3px; }
.d2 { height: 28px; padding: 0 6px; width: 162px; gap: 2px; flex: none; }
.d2 .sep { margin-left: 6px; margin-right: 0; }
.d2 .act { margin-left: -1px; }
.vert { margin-left: 3px; }
.canvas { align-self: stretch; flex: 1; min-height: 0; border: 2px solid #f00; background: #14171e; overflow: hidden; }
.d3 { height: 28px; width: 236px; padding: 0 4px; gap: 3px; flex: none; }
.dstatus { display: flex; gap: 2px; height: 26px; padding-top: 3px; flex: none; }
.dstatus > span { border: 1px solid #d7d7d7; background: linear-gradient(#fff, #f0f0f0); display: flex; align-items: center; }
.pos { width: 98px; padding-left: 4px; font-size: 11px; }
.hint { flex: 1; padding-left: 1px; }
.grip { align-self: flex-end; margin: 0 0 3px -14px; }

.status { display: flex; gap: 2px; height: 21px; padding-top: 1px; flex: none; }
.status > span { border: 1px solid #d0d0d0; background: linear-gradient(#fff, #f0f0f0); display: flex; align-items: center; padding-left: 1px; }
.s1 { width: 148px; }
.s2 { width: 78px; }
.s3 { width: 98px; }
.s4 { width: 48px; }
.s5 { flex: 1; }

.ime { position: absolute; right: 0; bottom: 44px; height: 24px; display: flex; align-items: center; gap: 6px; padding: 0 5px 0 0; background: #fff; border: 1px solid #bcd0e6; color: #2074c8; z-index: 4; }
.ime .logo { margin-left: -1px; }
.ime b { font: bold 15px/16px "Noto Sans CJK SC", sans-serif; }
.ime .punct { width: 16px; }

.taskbar { display: flex; height: 40px; background: #020b0e; color: #fff; flex: none; }
.start { width: 48px; justify-content: center; }
.cortana { width: 342px; background: #333; display: flex; align-items: center; padding: 0 10px 0 8px; gap: 4px; color: #999; flex: none; }
.cortana input { flex: 1; min-width: 0; font-size: 14px; line-height: 20px; }
.cortana input::placeholder { color: #9a9a9a; opacity: 1; }
.apps { display: flex; padding-left: 4px; gap: 1px; }
.apps button { width: 48px; justify-content: center; }
.pair { width: 5px; height: 16px; align-self: center; margin: 0 9px 0 10px; border: solid #3c4345; border-width: 0 1px; }
.run { background: linear-gradient(#76b9ed, #76b9ed) bottom / 40px 2px no-repeat; }
.front { background: linear-gradient(#76b9ed, #76b9ed) bottom / 48px 2px no-repeat #343c3f; }
.tray { margin-left: auto; display: flex; align-items: center; gap: 8px; }
.two { display: flex; flex-direction: column; align-items: center; justify-content: center; gap: 2px; }
.cpu { width: 60px; }
.tray > button:first-of-type { margin-right: -1px; margin-left: 5px; }
.clock { width: 60px; margin-left: 8px; }
.zh { font: 13px/16px "Noto Sans CJK SC", sans-serif; }
.tray .zh + svg { margin-left: 5px; }
.notice { margin: 0 12px 0 11px; }
.peek { width: 1px; height: 40px; background: #3a4244; margin-right: 3px; }
</style>
